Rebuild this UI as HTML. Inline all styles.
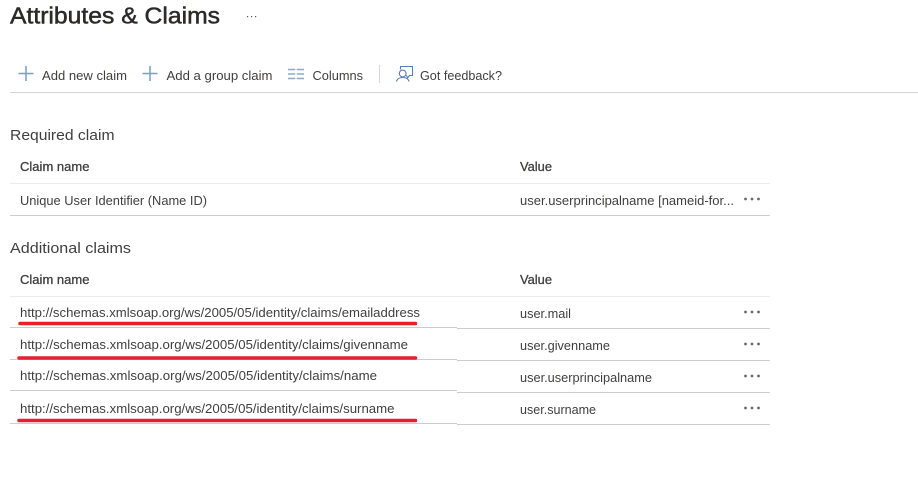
<!DOCTYPE html>
<html lang="en">
<head>
<meta charset="utf-8">
<title>Attributes &amp; Claims</title>
<style>
html,body{margin:0;padding:0;background:#fff;width:918px;height:486px;overflow:hidden}
svg{display:block}
text{font-family:"Liberation Sans",sans-serif;font-size:12.5px;fill:#403f3e;white-space:pre}
</style>
</head>
<body>
<svg width="918" height="486" viewBox="0 0 918 486" xmlns="http://www.w3.org/2000/svg">
<rect width="918" height="486" fill="#fff"/>

<text x="10" y="23.500" textLength="210" lengthAdjust="spacingAndGlyphs" style="font-size:23.500px;stroke:#2b2a29;stroke-width:.5px;fill:#2b2a29">Attributes &amp; Claims</text>
<g fill="#555"><rect x="247" y="16" width="1.200" height="1.200"/><rect x="251" y="16" width="1.200" height="1.200"/><rect x="255" y="16" width="1.200" height="1.200"/></g>

<path d="M26 66V81M18.500 73.500H33.500M150 66V81M142.500 73.500H157.500" stroke="#7c9cc9" stroke-width="1.500" fill="none"/>
<text x="42" y="80" textLength="85" lengthAdjust="spacingAndGlyphs">Add new claim</text>
<text x="166.500" y="80" textLength="106" lengthAdjust="spacingAndGlyphs">Add a group claim</text>
<path d="M288 69.500H295.300M288 74H295.300M288 78.500H295.300M296.700 69.500H304M296.700 74H304M296.700 78.500H304" stroke="#8fa8cc" stroke-width="1.600" fill="none"/>
<text x="312.500" y="80" textLength="50.500" lengthAdjust="spacingAndGlyphs">Columns</text>
<rect x="379" y="65" width="1" height="18" fill="#d8d6d4"/>
<g fill="none" stroke="#5a7db5" stroke-width="1.100">
<path d="M400.500 69.500V66.500H412.500V75.500H409.500L407.500 78L406.500 75.500"/>
<circle cx="402.700" cy="73.500" r="3.400"/>
<path d="M396.500 81.500C397 79 399.500 77.500 402.700 77.500C406 77.500 408.500 79 409 81.500"/>
</g>
<text x="420" y="80" textLength="82" lengthAdjust="spacingAndGlyphs">Got feedback?</text>
<rect x="10" y="92" width="908" height="1" fill="#d4d4d4"/>

<text x="10" y="140" textLength="104.500" lengthAdjust="spacingAndGlyphs" style="font-size:15px">Required claim</text>
<text x="20" y="171" textLength="69.500" lengthAdjust="spacingAndGlyphs" style="stroke:#403f3e;stroke-width:.3px">Claim name</text>
<text x="520" y="171" textLength="32" lengthAdjust="spacingAndGlyphs" style="stroke:#403f3e;stroke-width:.3px">Value</text>
<rect x="10" y="183" width="760" height="1" fill="#edebe9"/>
<text x="20" y="205" textLength="187" lengthAdjust="spacingAndGlyphs">Unique User Identifier (Name ID)</text>
<text x="520" y="205" textLength="214" lengthAdjust="spacingAndGlyphs">user.userprincipalname [nameid-for...</text>
<rect x="10" y="215" width="760" height="1" fill="#cccccc"/>

<text x="10" y="253" textLength="121" lengthAdjust="spacingAndGlyphs" style="font-size:15px">Additional claims</text>
<text x="20" y="284" textLength="69.500" lengthAdjust="spacingAndGlyphs" style="stroke:#403f3e;stroke-width:.3px">Claim name</text>
<text x="520" y="284" textLength="32" lengthAdjust="spacingAndGlyphs" style="stroke:#403f3e;stroke-width:.3px">Value</text>
<rect x="10" y="296" width="760" height="1" fill="#edebe9"/>

<text x="20" y="317" textLength="400" lengthAdjust="spacingAndGlyphs">http://schemas.xmlsoap.org/ws/2005/05/identity/claims/emailaddress</text>
<text x="20" y="349" textLength="388" lengthAdjust="spacingAndGlyphs">http://schemas.xmlsoap.org/ws/2005/05/identity/claims/givenname</text>
<text x="20" y="380" textLength="357" lengthAdjust="spacingAndGlyphs">http://schemas.xmlsoap.org/ws/2005/05/identity/claims/name</text>
<text x="20" y="413" textLength="374.500" lengthAdjust="spacingAndGlyphs">http://schemas.xmlsoap.org/ws/2005/05/identity/claims/surname</text>

<text x="520" y="318" textLength="51" lengthAdjust="spacingAndGlyphs">user.mail</text>
<text x="520" y="350" textLength="90" lengthAdjust="spacingAndGlyphs">user.givenname</text>
<text x="520" y="382" textLength="132" lengthAdjust="spacingAndGlyphs">user.userprincipalname</text>
<text x="520" y="414" textLength="76" lengthAdjust="spacingAndGlyphs">user.surname</text>

<g fill="#cccccc">
<rect x="10" y="327" width="447" height="1"/><rect x="457" y="328" width="313" height="1"/>
<rect x="10" y="359" width="447" height="1"/><rect x="457" y="360" width="313" height="1"/>
<rect x="10" y="390" width="447" height="1"/><rect x="457" y="392" width="313" height="1"/>
<rect x="10" y="423" width="447" height="1"/><rect x="457" y="424" width="313" height="1"/>
</g>

<g stroke="#e81f2d" stroke-width="3.500" stroke-linecap="round" fill="none">
<path d="M20 323.500H415.500"/>
<path d="M19 358H415.500"/>
<path d="M19 420.500H415.500"/>
</g>

<g fill="#6a6a6a">
<circle cx="745.500" cy="199" r="1.400"/><circle cx="752" cy="199" r="1.400"/><circle cx="758.500" cy="199" r="1.400"/>
<circle cx="745.500" cy="312" r="1.400"/><circle cx="752" cy="312" r="1.400"/><circle cx="758.500" cy="312" r="1.400"/>
<circle cx="745.500" cy="344" r="1.400"/><circle cx="752" cy="344" r="1.400"/><circle cx="758.500" cy="344" r="1.400"/>
<circle cx="745.500" cy="376" r="1.400"/><circle cx="752" cy="376" r="1.400"/><circle cx="758.500" cy="376" r="1.400"/>
<circle cx="745.500" cy="408" r="1.400"/><circle cx="752" cy="408" r="1.400"/><circle cx="758.500" cy="408" r="1.400"/>
</g>
</svg>
</body>
</html>
